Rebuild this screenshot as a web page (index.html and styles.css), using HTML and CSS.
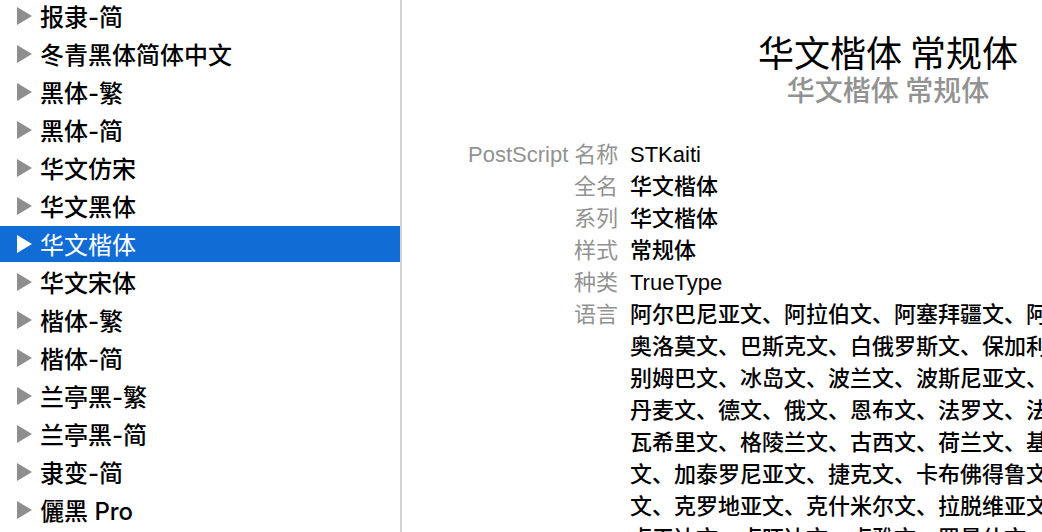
FILE: index.html
```html
<!DOCTYPE html>
<html lang="zh-Hans">
<head>
<meta charset="utf-8">
<meta name="viewport" content="width=device-width, initial-scale=1">
<title>字体册</title>
<link rel="stylesheet" href="styles.css">
</head>
<body>
<div class="window">
  <nav class="sidebar" aria-label="字体">
    <ul class="font-list">
      <li><button class="font-row" type="button"><svg class="arrow" viewBox="0 0 15 18" aria-hidden="true"><path d="M0 0L15 9L0 18Z"/></svg>报隶-简</button></li>
      <li><button class="font-row" type="button"><svg class="arrow" viewBox="0 0 15 18" aria-hidden="true"><path d="M0 0L15 9L0 18Z"/></svg>冬青黑体简体中文</button></li>
      <li><button class="font-row" type="button"><svg class="arrow" viewBox="0 0 15 18" aria-hidden="true"><path d="M0 0L15 9L0 18Z"/></svg>黑体-繁</button></li>
      <li><button class="font-row" type="button"><svg class="arrow" viewBox="0 0 15 18" aria-hidden="true"><path d="M0 0L15 9L0 18Z"/></svg>黑体-简</button></li>
      <li><button class="font-row" type="button"><svg class="arrow" viewBox="0 0 15 18" aria-hidden="true"><path d="M0 0L15 9L0 18Z"/></svg>华文仿宋</button></li>
      <li><button class="font-row" type="button"><svg class="arrow" viewBox="0 0 15 18" aria-hidden="true"><path d="M0 0L15 9L0 18Z"/></svg>华文黑体</button></li>
      <li><button class="font-row selected" type="button" aria-current="true"><svg class="arrow" viewBox="0 0 15 18" aria-hidden="true"><path d="M0 0L15 9L0 18Z"/></svg>华文楷体</button></li>
      <li><button class="font-row" type="button"><svg class="arrow" viewBox="0 0 15 18" aria-hidden="true"><path d="M0 0L15 9L0 18Z"/></svg>华文宋体</button></li>
      <li><button class="font-row" type="button"><svg class="arrow" viewBox="0 0 15 18" aria-hidden="true"><path d="M0 0L15 9L0 18Z"/></svg>楷体-繁</button></li>
      <li><button class="font-row" type="button"><svg class="arrow" viewBox="0 0 15 18" aria-hidden="true"><path d="M0 0L15 9L0 18Z"/></svg>楷体-简</button></li>
      <li><button class="font-row" type="button"><svg class="arrow" viewBox="0 0 15 18" aria-hidden="true"><path d="M0 0L15 9L0 18Z"/></svg>兰亭黑-繁</button></li>
      <li><button class="font-row" type="button"><svg class="arrow" viewBox="0 0 15 18" aria-hidden="true"><path d="M0 0L15 9L0 18Z"/></svg>兰亭黑-简</button></li>
      <li><button class="font-row" type="button"><svg class="arrow" viewBox="0 0 15 18" aria-hidden="true"><path d="M0 0L15 9L0 18Z"/></svg>隶变-简</button></li>
      <li><button class="font-row" type="button"><svg class="arrow" viewBox="0 0 15 18" aria-hidden="true"><path d="M0 0L15 9L0 18Z"/></svg>儷黑 Pro</button></li>
    </ul>
  </nav>
  <main class="detail">
    <div class="sheet">
      <header class="heading">
        <h1 class="sample">华文楷体 常规体</h1>
        <p class="subtitle">华文楷体 常规体</p>
      </header>
      <dl class="facts">
        <dt>PostScript 名称</dt><dd>STKaiti</dd>
        <dt>全名</dt><dd>华文楷体</dd>
        <dt>系列</dt><dd>华文楷体</dd>
        <dt>样式</dt><dd>常规体</dd>
        <dt>种类</dt><dd>TrueType</dd>
        <dt>语言</dt>
        <dd>阿尔巴尼亚文、阿拉伯文、阿塞拜疆文、阿<br>奥洛莫文、巴斯克文、白俄罗斯文、保加利<br>别姆巴文、冰岛文、波兰文、波斯尼亚文、<br>丹麦文、德文、俄文、恩布文、法罗文、法<br>瓦希里文、格陵兰文、古西文、荷兰文、基<br>文、加泰罗尼亚文、捷克文、卡布佛得鲁文<br>文、克罗地亚文、克什米尔文、拉脱维亚文<br>卢干达文、卢旺达文、卢雅文、罗曼什文、</dd>
      </dl>
    </div>
  </main>
</div>
</body>
</html>
```
FILE: styles.css
```css
* {
  box-sizing: border-box;
}

body {
  margin: 0;
  background: #fff;
  color: #000;
  font-family: "Liberation Sans", "Noto Sans CJK SC", sans-serif;
}

.window {
  display: flex;
  height: 100vh;
  overflow: hidden;
}

.sidebar {
  flex: 0 0 402px;
  border-right: 2px solid #d2d2d2;
  overflow: hidden;
}

.font-list {
  display: grid;
  gap: 2px;
  margin: -2px 0 0;
  padding: 0;
  list-style: none;
}

.font-row {
  display: flex;
  align-items: center;
  gap: 8px;
  width: 100%;
  height: 36px;
  padding: 4px 17px 0;
  border: 0;
  background: transparent;
  color: #000;
  font-family: Inter, "Noto Sans CJK SC", sans-serif;
  font-size: 24px;
  font-weight: 500;
  line-height: 32px;
  text-align: left;
  white-space: nowrap;
}

.arrow {
  flex: none;
  width: 15px;
  height: 18px;
  margin-bottom: 4px;
  fill: #8e8e8e;
}

.selected {
  background: #116cd6;
  color: #fff;
  font-weight: 400;
}

.selected .arrow {
  fill: #fff;
}

.detail {
  flex: 1;
  min-width: 0;
  overflow: hidden;
}

/* The sheet keeps its full width and is clipped by narrow windows. */
.sheet {
  min-width: 972px;
  padding: 30px 0 0 66px;
}

.heading {
  margin-left: -66px;
  text-align: center;
}

.sample {
  margin: 0;
  font-family: STKaiti, KaiTi, "Noto Sans CJK SC", sans-serif;
  font-size: 36px;
  font-weight: 400;
  line-height: 42px;
}

.subtitle {
  margin: 0;
  color: #929292;
  font-family: "Noto Sans CJK SC", sans-serif;
  font-size: 28px;
  font-weight: 500;
  line-height: 34px;
}

.facts {
  display: grid;
  grid-template-columns: 150px 1fr;
  column-gap: 12px;
  margin: 33px 0 0;
  font-size: 22px;
  line-height: 32px;
  white-space: nowrap;
}

.facts dt {
  color: #929292;
  text-align: right;
}

.facts dd {
  margin: 0;
  font-weight: 500;
}
```
